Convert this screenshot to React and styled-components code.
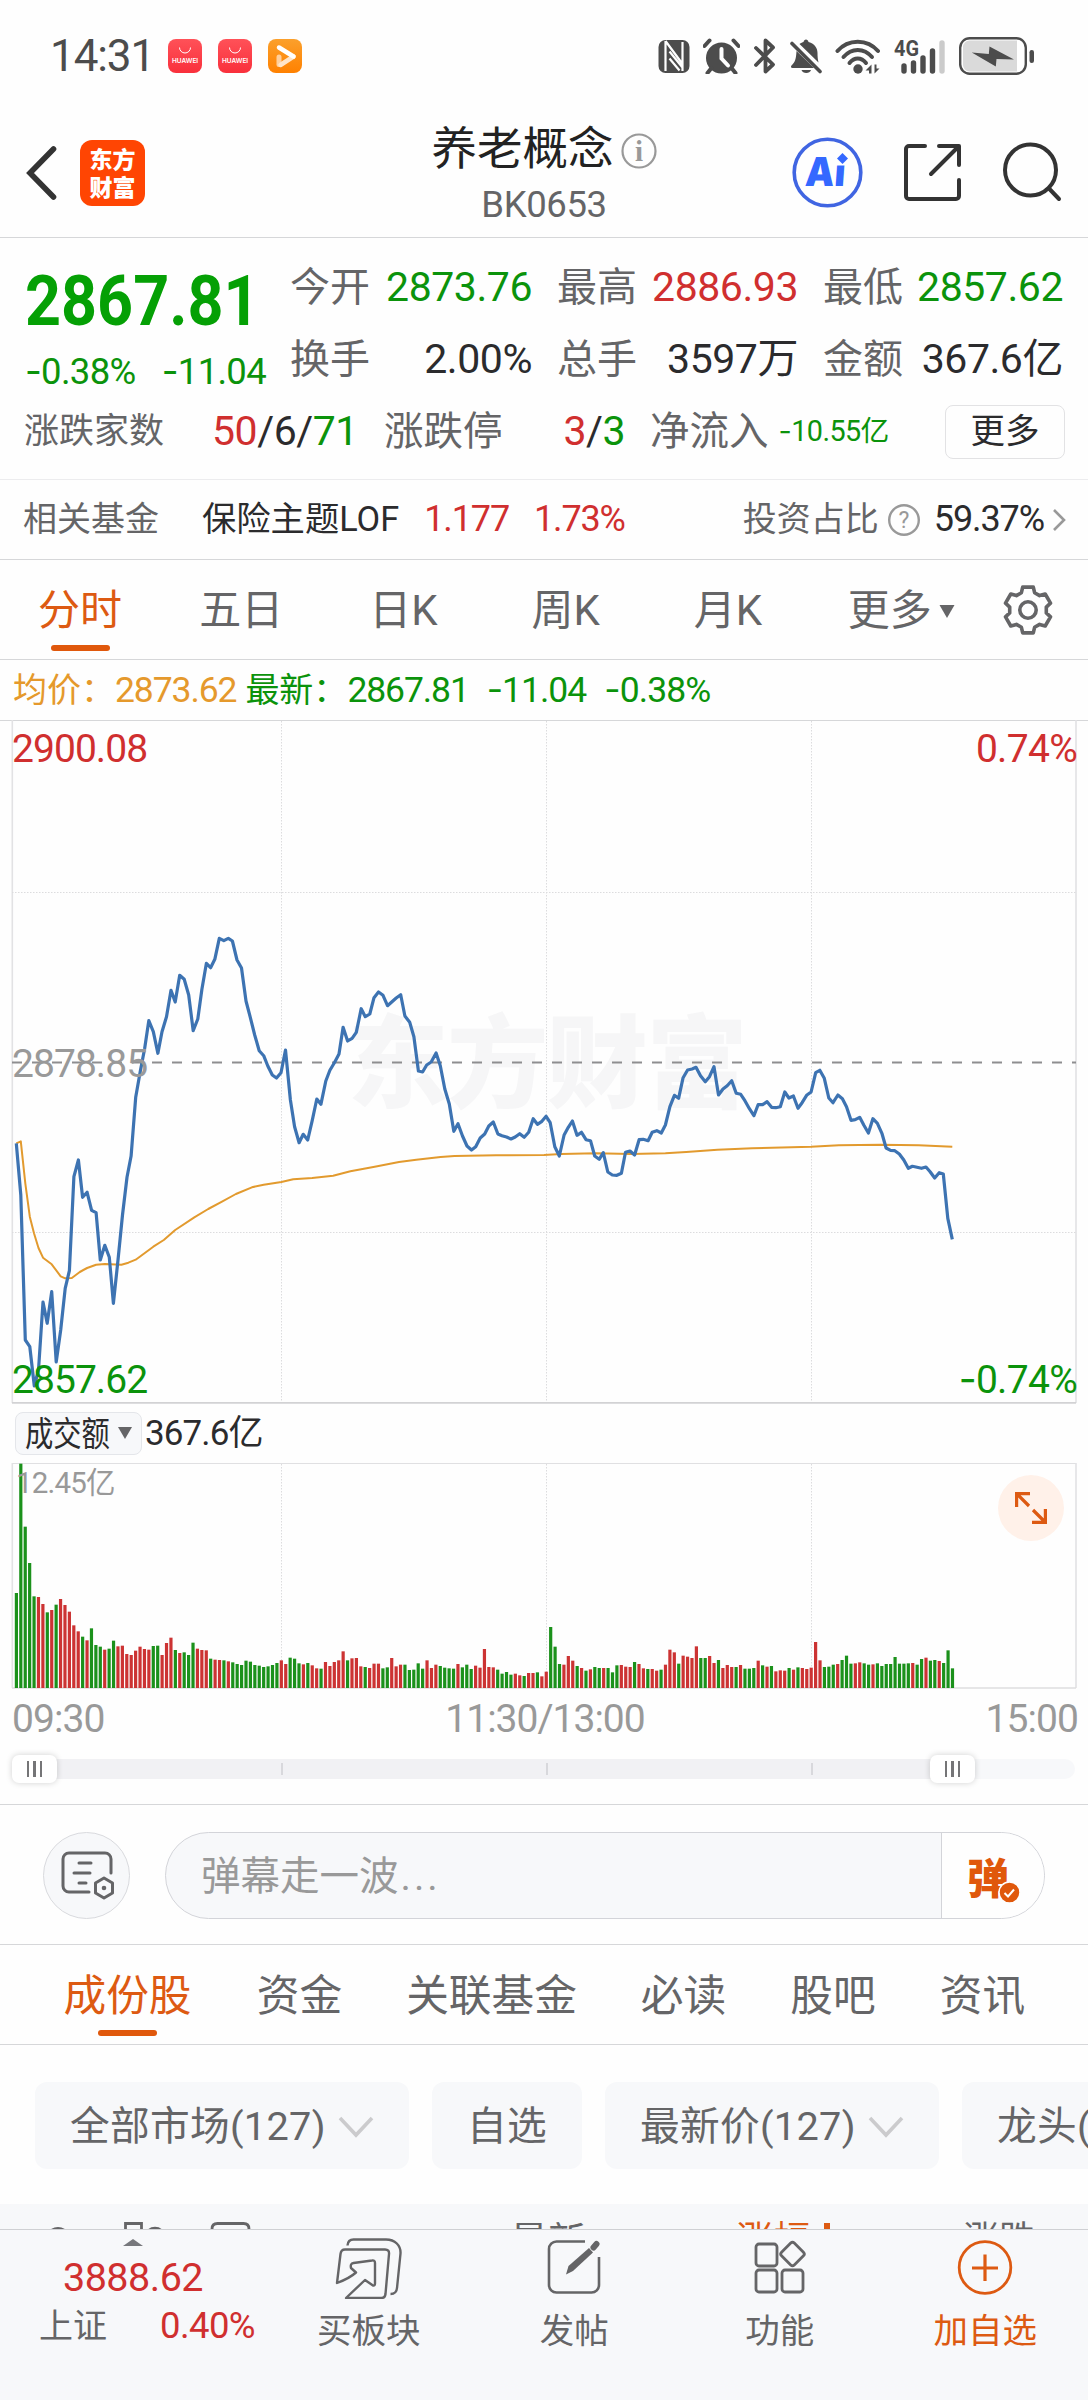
import React from "react";
import styled, { createGlobalStyle } from "styled-components";

const GREEN = "#0b930b";
const RED = "#d02f2f";
const ORANGE = "#dd5a12";
const INK = "#2b2b2d";
const GREY = "#656567";
const MUTED = "#999999";
const LINE = "#d6d7d9";
const PANEL = "#f7f8fa";

const Global = createGlobalStyle`
  * { box-sizing: border-box; }
  body { margin: 0; background: #fefefe; font-family: Roboto, "Noto Sans CJK SC", sans-serif; }
  svg { display: block; flex: none; }
`;

const Screen = styled.div`
  width: 1088px;
  height: 2400px;
  overflow: hidden;
  display: flex;
  flex-direction: column;
  background: #fefefe;
  color: ${INK};
  white-space: nowrap;
`;

const Text = styled.span`
  flex: none;
  font-size: ${(p) => p.$s || 40}px;
  line-height: 1.2;
  font-weight: ${(p) => p.$w || 400};
  color: ${(p) => p.$c || INK};
  letter-spacing: ${(p) => p.$ls || 0}px;
  margin-left: ${(p) => p.$ml || 0}px;
`;

const Dash = styled.span`
  font-family: Inter, sans-serif;
`;

/* Numbers get a wider sign than Roboto's own hyphen. */
function Num({ children, ...rest }) {
  const s = String(children);
  return (
    <Text {...rest}>
      {s[0] === "-" ? <Dash>-</Dash> : null}
      {s[0] === "-" ? s.slice(1) : s}
    </Text>
  );
}

/* ---------- status bar ---------- */
const StatusBar = styled.div`
  height: 112px;
  flex: none;
  display: flex;
  align-items: center;
  padding: 0 53px 0 50px;
`;
const AppBadges = styled.div`
  display: flex;
  gap: 16px;
  margin-left: 14px;
`;
const Badge = styled.div`
  width: 34px;
  height: 34px;
  border-radius: 8px;
  background: ${(p) => p.$bg};
  display: flex;
  flex-direction: column;
  align-items: center;
  justify-content: center;
`;
const BadgeWord = styled.span`
  font: 600 6.500px/8px Inter, sans-serif;
  color: #fff;
  margin-top: 3px;
`;
const StatusIcons = styled.div`
  display: flex;
  align-items: center;
  margin-left: auto;
`;
const Slot = styled.div`
  width: ${(p) => p.$w}px;
  margin-left: ${(p) => p.$ml || 0}px;
  flex: none;
`;

function StoreBadge() {
  return (
    <Badge $bg="linear-gradient(#ff5158, #f9303c)">
      <svg width="14" height="7" viewBox="0 0 14 7">
        <path d="M1.500 0.500a5.500 5.500 0 0 0 11 0" fill="none" stroke="#fff" strokeWidth="1" />
      </svg>
      <BadgeWord>HUAWEI</BadgeWord>
    </Badge>
  );
}

function Status() {
  const c = "#4c4c4c";
  return (
    <StatusBar>
      <Text $s={44} $c={c} $ls={-1.1}>14:31</Text>
      <AppBadges>
        <StoreBadge />
        <StoreBadge />
        <Badge $bg="linear-gradient(#fba02c, #ff8100)">
          <svg width="34" height="34" viewBox="0 0 34 34" fill="none" strokeLinecap="round" strokeLinejoin="round">
            <path d="M11 18v7.500" stroke="#ffcf9c" strokeWidth="5" />
            <path d="M12.500 26l13-8.500" stroke="#ffe4c8" strokeWidth="4.500" />
            <path d="M11 8.500l14.500 9" stroke="#fff" strokeWidth="4.500" />
          </svg>
        </Badge>
      </AppBadges>
      <StatusIcons>
        <Slot $w={32}>
          <svg width="32" height="36" viewBox="0 0 32 36">
            <rect x="0.500" y="2" width="31" height="33" rx="7" fill={c} />
            <path d="M7.500 3v30M24.500 4v29M7.500 3l17 23M11.500 13.500l13 16M11.500 20.500l10 12" fill="none" stroke="#fefefe" strokeWidth="2.200" />
          </svg>
        </Slot>
        <Slot $w={37} $ml={13}>
          <svg width="37" height="36" viewBox="0 0 37 36">
            <circle cx="18.500" cy="20" r="15.500" fill={c} />
            <path d="M1.500 8l5-5.500M35.500 8l-5-5.500M8.500 30l-4 5M28.500 30l4 5" stroke={c} strokeWidth="4" strokeLinecap="round" />
            <path d="M18.500 11v9.500l6.500 7" fill="none" stroke="#fefefe" strokeWidth="4" strokeLinecap="round" />
          </svg>
        </Slot>
        <Slot $w={22} $ml={14}>
          <svg width="22" height="36" viewBox="0 0 22 36">
            <path d="M2 10l17 16.500-7.500 7V2.500l7.500 7L2 27" fill="none" stroke={c} strokeWidth="3.800" strokeLinejoin="round" strokeLinecap="round" />
          </svg>
        </Slot>
        <Slot $w={32} $ml={14}>
          <svg width="32" height="36" viewBox="0 0 32 36">
            <path d="M6.500 13L24 30H2.500c-1.500 0-2-1.500-1-2.500C5 24 6 22 6.500 13z" fill={c} />
            <path d="M9.500 6C11 4.800 12.500 4.300 13.500 4c.5-3.500 4.500-3.500 5 0 6.500 1.500 9 6.500 9 11 0 3.500.3 6.500 1 9.500z" fill={c} />
            <path d="M2 5.500l28 28" stroke={c} strokeWidth="3.600" strokeLinecap="round" />
            <path d="M11.500 32h9.500c-1 4-8.500 4-9.500 0z" fill={c} />
          </svg>
        </Slot>
        <Slot $w={46} $ml={13}>
          <svg width="46" height="36" viewBox="0 0 46 36">
            <g fill="none" stroke={c} strokeWidth="4" strokeLinecap="round">
              <path d="M2.500 13C13 0.500 32.500 0.500 43 13" />
              <path d="M8.500 19C16.500 9.500 29 9.500 37 19" />
              <path d="M14.500 25c4.800-6 11.700-6 16.500 0" />
            </g>
            <circle cx="23" cy="31" r="4.700" fill={c} />
            <path d="M36.500 26.500v9h-2.500v-3h-3.500zM39.500 26.500v9l5-5h-3v-4z" fill={c} />
          </svg>
        </Slot>
        <Slot $w={52} $ml={13}>
          <svg width="52" height="36" viewBox="0 0 52 36">
            <text x="0" y="18" fontFamily="Roboto" fontWeight="700" fontSize="22" textLength="25" lengthAdjust="spacingAndGlyphs" fill={c}>4G</text>
            <g stroke={c} strokeWidth="5.400" strokeLinecap="round">
              <path d="M10 28v5M19.500 25v8M29 20v13M38.500 13v20" />
              <path d="M48 5v28" stroke="#cbcbcb" />
            </g>
          </svg>
        </Slot>
        <Slot $w={76} $ml={13}>
          <svg width="76" height="40" viewBox="0 0 76 40">
            <rect x="1.200" y="2.200" width="65.600" height="35.600" rx="9.500" fill="#fff" stroke={c} strokeWidth="2.400" />
            <path d="M10.500 4.500H58v31H10.500a6.500 6.500 0 0 1-6.500-6.500V11a6.500 6.500 0 0 1 6.500-6.500z" fill="#dadada" />
            <path d="M12.800 16.500L29.800 18l.7-7.500L55 23.500 37.500 23l-.7 7.500z" fill={c} />
            <rect x="70.500" y="14" width="4.500" height="13" rx="2.200" fill={c} />
          </svg>
        </Slot>
      </StatusIcons>
    </StatusBar>
  );
}

/* ---------- header ---------- */
const HeaderBar = styled.div`
  height: 126px;
  flex: none;
  display: grid;
  grid-template-columns: 400px 288px 400px;
  border-bottom: 1px solid ${LINE};
`;
const HeaderSide = styled.div`
  display: flex;
  align-items: center;
  justify-content: ${(p) => (p.$end ? "flex-end" : "flex-start")};
  padding: ${(p) => (p.$end ? "0 26px 5px 0" : "0 0 4px 26px")};
`;
const Logo = styled.div`
  width: 65px;
  height: 66px;
  margin-left: 23px;
  border-radius: 12px;
  background: #ff4503;
  color: #fff;
  font: 900 23px/28px "Noto Sans CJK SC", sans-serif;
  text-align: center;
  padding-top: 4px;
`;
const HeaderTitle = styled.div`
  display: flex;
  flex-direction: column;
  align-items: center;
  padding-top: 11px;
`;
const TitleLine = styled.div`
  display: flex;
  align-items: center;
  height: 60px;
  gap: 7px;
  padding-bottom: 5px;
`;

function Header() {
  return (
    <HeaderBar>
      <HeaderSide>
        <svg width="31" height="56" viewBox="0 0 31 56">
          <path d="M27.500 4L4 28l23.500 24" fill="none" stroke="#333" strokeWidth="5.600" strokeLinecap="round" />
        </svg>
        <Logo>东方<br />财富</Logo>
      </HeaderSide>
      <HeaderTitle>
        <TitleLine>
          <Text $s={45.500} $c="#222">养老概念</Text>
          <svg width="36" height="36" viewBox="0 0 36 36">
            <circle cx="18" cy="18" r="16.500" fill="none" stroke={MUTED} strokeWidth="2.200" />
            <text x="18" y="28" textAnchor="middle" fontFamily="Liberation Serif" fontWeight="700" fontSize="29" fill={MUTED}>i</text>
          </svg>
        </TitleLine>
        <Text $s={36.500} $c={GREY} $ls={-0.4}>BK0653</Text>
      </HeaderTitle>
      <HeaderSide $end>
        <svg width="71" height="71" viewBox="0 0 71 71">
          <circle cx="35.500" cy="35.500" r="33.300" fill="none" stroke="#4065e2" strokeWidth="3.600" />
          <g transform="skewX(-4)">
            <text x="16" y="49" fontFamily="Inter" fontWeight="900" fontSize="40" textLength="40" lengthAdjust="spacingAndGlyphs" fill="#3468ff">Ai</text>
          </g>
          <rect x="41" y="14" width="17" height="14.500" fill="#fefefe" />
          <path d="M50.500 16l5.500 5.500-5.500 5.500-5.500-5.500z" fill="#3468ff" />
        </svg>
        <Slot $w={60} $ml={40}>
          <svg width="60" height="60" viewBox="0 0 60 60" fill="none" stroke="#333" strokeWidth="4" strokeLinecap="round" strokeLinejoin="round">
            <path d="M22 4H6a3 3 0 0 0-3 3v47a3 3 0 0 0 3 3h47a3 3 0 0 0 3-3V38" />
            <path d="M36 4h20v19M28 32L55 5" />
          </svg>
        </Slot>
        <Slot $w={59} $ml={40}>
          <svg width="59" height="60" viewBox="0 0 59 60" fill="none" stroke="#333" strokeWidth="4" strokeLinecap="round">
            <circle cx="27.500" cy="28" r="25.500" />
            <path d="M46 46.500L56 57" />
          </svg>
        </Slot>
      </HeaderSide>
    </HeaderBar>
  );
}

/* ---------- quote ---------- */
const QuotePanel = styled.div`
  height: 242px;
  flex: none;
  padding: 14px 0 0;
  border-bottom: 1px solid #ececee;
`;
const QuoteTop = styled.div`
  display: grid;
  grid-template-columns: 265px 1fr;
  padding: 0 25px;
`;
const PriceBlock = styled.div`
  padding-top: 7px;
`;
const Price = styled.div`
  height: 80px;
  font-size: 71px;
  line-height: 84px;
  font-weight: 700;
  color: #05a005;
  transform: scaleX(0.885);
  transform-origin: 0 50%;
`;
const Changes = styled.div`
  display: flex;
  justify-content: space-between;
  align-items: center;
  height: 56px;
  padding: 9px 24px 0 0;
`;
const StatGrid = styled.div`
  display: grid;
  grid-template-columns: 242px 241px 240px;
  column-gap: 25px;
  grid-auto-rows: 72px;
`;
const Stat = styled.div`
  display: flex;
  align-items: center;
  justify-content: space-between;
`;
const StatRow = styled.div`
  display: flex;
  align-items: center;
  height: 72px;
  padding: 0 23px 1px 24px;
`;
const MoreButton = styled.button`
  width: 120px;
  height: 54px;
  margin-left: auto;
  display: flex;
  align-items: center;
  justify-content: center;
  padding: 0;
  border: 1.500px solid #e2e2e4;
  border-radius: 8px;
  background: #fefefe;
  font-family: inherit;
`;

const STATS = [
  ["今开", "2873.76", GREEN],
  ["最高", "2886.93", RED],
  ["最低", "2857.62", GREEN],
  ["换手", "2.00%", INK],
  ["总手", "3597万", INK],
  ["金额", "367.6亿", INK],
];

function Quote() {
  return (
    <QuotePanel>
      <QuoteTop>
        <PriceBlock>
          <Price>2867.81</Price>
          <Changes>
            <Num $s={36.500} $c={GREEN} $ls={-0.7}>-0.38%</Num>
            <Num $s={36.500} $c={GREEN} $ls={-0.7}>-11.04</Num>
          </Changes>
        </PriceBlock>
        <StatGrid>
          {STATS.map(([label, value, color]) => (
            <Stat key={label}>
              <Text $s={40} $c={GREY}>{label}</Text>
              <Text $s={41} $c={color} $ls={-0.45}>{value}</Text>
            </Stat>
          ))}
        </StatGrid>
      </QuoteTop>
      <StatRow>
        <Text $s={35} $c={GREY}>涨跌家数</Text>
        <Text $s={41} $ml={48} $ls={-0.45}>
          <Text $s={41} $c={RED} $ls={-0.45}>50</Text>/6/<Text $s={41} $c={GREEN} $ls={-0.45}>71</Text>
        </Text>
        <Text $s={39.500} $c={GREY} $ml={26}>涨跌停</Text>
        <Text $s={41} $ml={61} $ls={-0.45}>
          <Text $s={41} $c={RED} $ls={-0.45}>3</Text>/<Text $s={41} $c={GREEN} $ls={-0.45}>3</Text>
        </Text>
        <Text $s={39.500} $c={GREY} $ml={25}>净流入</Text>
        <Num $s={28.800} $c={GREEN} $ml={10} $ls={-0.6}>-10.55亿</Num>
        <MoreButton><Text $s={34.500}>更多</Text></MoreButton>
      </StatRow>
    </QuotePanel>
  );
}

/* ---------- fund row ---------- */
const FundRow = styled.div`
  height: 80px;
  flex: none;
  display: flex;
  align-items: center;
  padding: 0 22px 0 23px;
  border-bottom: 1px solid ${LINE};
`;
const RightGroup = styled.div`
  margin-left: auto;
  display: flex;
  align-items: center;
`;

function Fund() {
  return (
    <FundRow>
      <Text $s={34} $c={GREY}>相关基金</Text>
      <Text $s={34.300} $ml={43}>保险主题LOF</Text>
      <Text $s={36} $c={RED} $ml={25} $ls={-1.1}>1.177</Text>
      <Text $s={36} $c={RED} $ml={25} $ls={-1.2}>1.73%</Text>
      <RightGroup>
        <Text $s={34} $c={GREY}>投资占比</Text>
        <Slot $w={34} $ml={8}>
          <svg width="34" height="34" viewBox="0 0 34 34">
            <circle cx="17" cy="17" r="14.800" fill="none" stroke={MUTED} strokeWidth="2.400" />
            <text x="17" y="25" textAnchor="middle" fontFamily="Roboto" fontSize="23" fill={MUTED}>?</text>
          </svg>
        </Slot>
        <Text $s={36} $ml={13} $ls={-1.1}>59.37%</Text>
        <Slot $w={14} $ml={8}>
          <svg width="14" height="26" viewBox="0 0 14 26">
            <path d="M2 3l10 10L2 23" fill="none" stroke={MUTED} strokeWidth="2.600" />
          </svg>
        </Slot>
      </RightGroup>
    </FundRow>
  );
}

/* ---------- period tabs ---------- */
const PeriodTabs = styled.div`
  height: 100px;
  flex: none;
  display: flex;
  border-bottom: 1px solid ${LINE};
`;
const Tab = styled.div`
  position: relative;
  display: flex;
  align-items: center;
  justify-content: center;
  width: ${(p) => p.$w}px;
  padding-top: 4px;
  &::after {
    content: "";
    display: ${(p) => (p.$on ? "block" : "none")};
    position: absolute;
    left: 50%;
    bottom: 8px;
    width: 59px;
    height: 6px;
    margin-left: -29.500px;
    border-radius: 3px;
    background: #e0580c;
  }
`;
const GearTab = styled.div`
  display: flex;
  align-items: center;
  margin-left: 9px;
`;
const PERIODS = ["分时", "五日", "日K", "周K", "月K"];

const GEAR_PATH = (() => {
  const pts = [];
  for (let i = 0; i < 6; i += 1) {
    const mid = -90 + i * 60;
    [[-21, 18.5], [-13, 23.5], [13, 23.5], [21, 18.5]].forEach(([d, r]) => {
      const a = ((mid + d) * Math.PI) / 180;
      pts.push(`${(26 + r * Math.cos(a)).toFixed(1)} ${(26 + r * Math.sin(a)).toFixed(1)}`);
    });
  }
  return `M${pts.join("L")}Z`;
})();

function Periods() {
  return (
    <PeriodTabs>
      {PERIODS.map((t, i) => (
        <Tab key={t} $w={i === 0 ? 160 : 162.3} $on={i === 0}>
          <Text $s={42} $c={i === 0 ? ORANGE : GREY}>{t}</Text>
        </Tab>
      ))}
      <Tab $w={184}>
        <Text $s={42} $c={GREY}>更多</Text>
        <Slot $w={16} $ml={7}>
          <svg width="16" height="13" viewBox="0 0 16 13"><path d="M0.500 0h15L8 13z" fill={GREY} /></svg>
        </Slot>
      </Tab>
      <GearTab>
        <svg width="52" height="52" viewBox="0 0 52 52" fill="none" stroke={GREY} strokeWidth="3.600" strokeLinejoin="round">
          <path d={GEAR_PATH} />
          <circle cx="26" cy="26" r="8.200" />
        </svg>
      </GearTab>
    </PeriodTabs>
  );
}

const Legend = styled.div`
  height: 60px;
  flex: none;
  display: flex;
  align-items: center;
  padding-left: 13px;
`;

/* ---------- price chart ---------- */
const W = 1568;
const right = (list) => list.map(([x, y]) => [x + W, y]);
const PRICE = [
  [47,730],[60,885],[73,1320],[86,1340],[99,1458],[111,1410],[124,1206],[136,1270],[149,1175],[162,1386],[175,1290],[188,1165],[200,1112],[213,830],[226,780],[238,892],[251,877],[264,931],[277,938],[289,1080],[302,1036],[315,1072],[327,1210],[340,1080],[353,945],[366,832],[378,768],[391,592],[404,515],[417,445],[429,362],[442,395],[455,460],[467,395],[480,350],[493,271],[505,306],[518,226],[531,238],[544,285],[557,392],[570,357],[582,268],[595,190],[607,203],[619,178],[632,115],[645,122],[658,115],[670,123],[683,180],[696,204],[709,303],[721,350],[734,405],[747,452],[760,467],[772,498],[785,525],[797,534],[810,518],[823,450],[837,600],[849,680],[862,728],[874,703],[887,720],[900,662],[913,597],[925,613],[939,543],[951,511],[964,488],[977,462],[989,382],[1002,423],[1015,415],[1027,397],[1041,326],[1053,350],[1066,342],[1078,293],[1091,276],[1104,286],[1117,317],[1130,305],[1142,294],[1155,284],[1167,348],[1181,367],[1193,410],[1206,513],[1218,516],[1230,495],[1243,486],[1257,459],[1269,497],[1282,567],[1295,612],[1308,694],[1320,671],[1333,708],[1346,738],[1359,750],[1371,740],[1384,714],[1397,702],[1409,678],[1422,666],[1435,702],[1447,707],[1460,711],[1473,717],[1485,711],[1498,701],[1511,712],[1524,697],[1537,656],[1549,673],[1562,664],
  ...right([[6,649],[18,668],[31,740],[44,768],[58,705],[70,682],[82,663],[95,706],[108,697],[121,719],[134,722],[146,768],[159,778],[171,758],[184,816],[197,825],[210,826],[223,820],[235,757],[248,753],[261,765],[274,719],[286,718],[300,722],[312,697],[325,692],[338,699],[350,675],[363,620],[376,586],[388,595],[401,533],[414,510],[427,507],[438,502],[451,527],[465,545],[477,530],[490,500],[503,585],[516,567],[528,557],[541,542],[554,580],[567,583],[579,602],[592,626],[605,647],[617,614],[630,614],[643,605],[656,622],[668,623],[681,620],[694,576],[706,594],[719,588],[732,625],[744,608],[757,586],[770,576],[783,518],[795,511],[808,535],[821,594],[833,608],[847,585],[860,596],[872,620],[885,661],[897,659],[910,652],[922,676],[935,699],[948,656],[961,670],[974,700],[986,744],[999,751],[1011,752],[1024,762],[1037,780],[1050,805],[1062,799],[1075,802],[1088,805],[1101,801],[1113,815],[1126,834],[1139,818],[1151,822],[1164,955],[1177,1018]]),
];
const AVERAGE = [
  [47,730],[60,724],[73,850],[86,950],[98,1000],[111,1044],[124,1073],[149,1093],[175,1129],[188,1135],[207,1134],[230,1116],[251,1104],[277,1094],[302,1092],[350,1094],[370,1088],[391,1079],[442,1040],[472,1020],[505,990],[560,952],[600,927],[640,905],[680,882],[726,862],[760,854],[811,846],[845,838],[900,834],[960,827],[1010,814],[1080,800],[1150,786],[1200,779],[1270,771],[1310,768],[1430,766],[1568,765],
  ...right([[50,762],[150,760],[250,762],[350,760],[410,756],[500,749],[600,745],[770,740],[850,736],[970,734],[1080,736],[1177,740]]),
];
const KX = 1088 / (2 * W);
const toPoints = (list) =>
  list.map(([x, y]) => `${(x * KX).toFixed(1)},${(180 + y / 3).toFixed(1)}`).join(" ");

const PriceChart = styled.div`
  position: relative;
  height: 684px;
  flex: none;
`;
const Mark = styled.div`
  position: absolute;
  top: ${(p) => p.$y - 24}px;
  left: ${(p) => (p.$right ? "auto" : "12px")};
  right: ${(p) => (p.$right ? "11px" : "auto")};
  height: 48px;
  display: flex;
  align-items: center;
`;

function Chart() {
  return (
    <PriceChart>
      <svg width="1088" height="684" viewBox="0 0 1088 684" fill="none">
        <path d="M0 0.500H1088" stroke={LINE} />
        <path d="M12.300 0V683M1076 0V683" stroke="#e2e2e4" strokeWidth="1.600" />
        <path d="M12 682.800H1076" stroke="#d2d2d4" strokeWidth="1.800" />
        <path d="M281.500 1V682M546.500 1V682M811.500 1V682M12 172.500H1076M12 512.500H1076" stroke="#dcdcde" strokeDasharray="1.500 1.500" />
        <text x="547.500" y="380" textAnchor="middle" fontFamily="Noto Sans CJK SC" fontWeight="900" fontSize="101" textLength="400" fill="#f6f6f7">东方财富</text>
        <path d="M12 342.500H1076" stroke="#8e8e90" strokeWidth="1.800" strokeDasharray="10 10" />
        <polyline points={toPoints(AVERAGE)} stroke="#e29a2e" strokeWidth="2" strokeLinejoin="round" />
        <polyline points={toPoints(PRICE)} stroke="#3d73b2" strokeWidth="3.200" strokeLinejoin="round" />
      </svg>
      <Mark $y={29}><Text $s={39} $c={RED} $ls={-0.95}>2900.08</Text></Mark>
      <Mark $y={29} $right><Text $s={39} $c={RED} $ls={-0.7}>0.74%</Text></Mark>
      <Mark $y={344}><Text $s={39} $c={MUTED} $ls={-0.95}>2878.85</Text></Mark>
      <Mark $y={660}><Text $s={39} $c={GREEN} $ls={-0.95}>2857.62</Text></Mark>
      <Mark $y={660} $right><Num $s={39} $c={GREEN} $ls={-0.7}>-0.74%</Num></Mark>
    </PriceChart>
  );
}

/* ---------- volume ---------- */
const VolumeBar = styled.div`
  height: 59px;
  flex: none;
  display: flex;
  align-items: center;
  padding-left: 15px;
`;
const Selector = styled.div`
  width: 127px;
  height: 43px;
  display: flex;
  align-items: center;
  padding-left: 9px;
  border: 1.500px solid #e4e6ea;
  border-radius: 8px;
  background: ${PANEL};
`;
const Narrow = styled.span`
  width: 92px;
  font-size: 34.500px;
  line-height: 40px;
  color: ${INK};
  transform: scaleX(0.82);
  transform-origin: 0 50%;
`;
const VolumeChart = styled.div`
  position: relative;
  height: 226px;
  flex: none;
`;
const FullButton = styled.div`
  position: absolute;
  right: 24px;
  top: 12px;
  width: 66px;
  height: 66px;
  border-radius: 50%;
  background: #fff1e9;
  display: flex;
  align-items: center;
  justify-content: center;
`;

const VOLUME = (
  "610g 222g 411g 520g 620g 622r 643r 668g 661r 645g 628r 646r 666r 707r 725r 741g 752r 716g 766g 771g " +
  "780r 777g 753g 770r 768r 793r 796r 783r 771r 778r 780r 769g 768g 796r 760r 744r 781g 790r 788g 796g " +
  "759g 777r 781r 782r 807g 810r 811r 812g 815r 818g 823g 826g 813g 816g 826g 828g 832g 830g 826g 820g " +
  "812r 823r 804g 807g 821g 824r 820g 827r 836r 837g 817r 829r 817r 812r 785r 812g 806r 805r 830r 832g " +
  "835r 822r 822r 836g 833g 805r 830r 825r 825g 841g 840g 821g 837g 812r 835r 825r 829g 834g 836g 837g " +
  "823r 833g 825g 838g 828r 834r 778r 832r 833r 840g 852g 847g 855g 852r 857r 859g 850r 850r 848g 860r " +
  "846r 712g 771g 823g 825r 799r 813r 829g 835r 843g 839r 832g 835g 835r 835g 848g 827g 826r 831r 832r " +
  "817g 823r 836r 838g 838r 843r 840g 825r 780r 788r 822g 798r 801r 805r 770r 805g 805g 799r 820r 811g " +
  "835r 826r 832r 832g 826r 837g 837g 835g 813r 827g 831r 829g 845r 842r 843r 835g 840r 833g 835r 838r " +
  "834r 757r 812r 832g 831g 825g 823r 811g 798g 822g 821r 818r 821g 825g 824r 821g 829g 823g 823g 802g " +
  "822g 822g 821g 820r 825g 808g 804r 813g 811g 814r 820g 782g 836g"
).split(" ");

function Volume() {
  return (
    <VolumeChart>
      <svg width="1088" height="226" viewBox="0 0 1088 226" fill="none">
        <path d="M12 0.500H1076" stroke="#e0e0e2" />
        <path d="M12.300 0V225M1076 0V225" stroke="#e2e2e4" strokeWidth="1.600" />
        <path d="M12 225H1076" stroke="#dededf" strokeWidth="1.600" />
        <path d="M281.500 1V225M546.500 1V225M811.500 1V225" stroke="#dcdcde" strokeDasharray="1.500 1.500" />
        {VOLUME.map((v, i) => {
          const top = (parseInt(v, 10) - 220) / 3;
          return (
            <rect
              key={i}
              x={14.8 + i * 4.4155}
              y={top}
              width="3.200"
              height={225 - top}
              fill={v.endsWith("g") ? "#1b911b" : "#cc3333"}
            />
          );
        })}
      </svg>
      <Mark $y={21}><Text $s={29.500} $c={MUTED} $ml={4} $ls={-0.8}>12.45亿</Text></Mark>
      <FullButton>
        <svg width="34" height="34" viewBox="0 0 34 34" fill="none" stroke={ORANGE} strokeWidth="3.200">
          <path d="M16 2.600H2.600V16M3 3l12 12M31.400 18v13.400H18M31 31L19 19" />
        </svg>
      </FullButton>
    </VolumeChart>
  );
}

const TimeAxis = styled.div`
  height: 60px;
  flex: none;
  display: grid;
  grid-template-columns: 1fr auto 1fr;
  align-items: center;
  padding: 0 10px 0 12px;
  & > :last-child { text-align: right; }
`;
const SliderRow = styled.div`
  height: 56px;
  flex: none;
  padding: 10px 13px 0 12px;
  border-bottom: 1px solid ${LINE};
`;
const Track = styled.div`
  position: relative;
  height: 20px;
  border-radius: 10px;
  background: linear-gradient(90deg, #f1f1f4 940px, #f7f8fa 940px);
`;
const Handle = styled.div`
  position: absolute;
  top: -4px;
  left: ${(p) => p.$x}px;
  width: 45px;
  height: 28px;
  border-radius: 7px;
  background: #fff;
  box-shadow: 0 0 6px rgba(0, 0, 0, 0.18);
  display: flex;
  align-items: center;
  justify-content: center;
  gap: 4px;
`;
const Grip = styled.i`
  width: 2.500px;
  height: 16px;
  background: #757577;
`;
const Tick = styled.i`
  position: absolute;
  top: 4px;
  left: ${(p) => p.$x}px;
  width: 1.500px;
  height: 12px;
  background: #d8d8dc;
`;

function Slider() {
  return (
    <SliderRow>
      <Track>
        <Tick $x={269} />
        <Tick $x={534} />
        <Tick $x={799} />
        {[0, 918].map((x) => (
          <Handle key={x} $x={x}><Grip /><Grip /><Grip /></Handle>
        ))}
      </Track>
    </SliderRow>
  );
}

/* ---------- comment bar ---------- */
const CommentBar = styled.div`
  height: 140px;
  flex: none;
  display: flex;
  align-items: center;
  padding: 2px 43px 0 43px;
  border-bottom: 1px solid ${LINE};
`;
const RoundButton = styled.div`
  width: 87px;
  height: 87px;
  border-radius: 50%;
  border: 1.500px solid #d9dade;
  background: ${PANEL};
  display: flex;
  align-items: center;
  justify-content: center;
`;
const InputPill = styled.div`
  width: 880px;
  height: 87px;
  margin-left: 35px;
  display: flex;
  overflow: hidden;
  border: 1.500px solid #d3d4d9;
  border-radius: 44px;
  background: ${PANEL};
`;
const InputField = styled.div`
  flex: 1;
  display: flex;
  align-items: center;
  padding: 2px 0 0 35px;
`;
const SendCell = styled.div`
  width: 103px;
  border-left: 1px solid #d3d4d9;
  background: #fefefe;
  display: flex;
  align-items: center;
  padding-left: 25px;
`;
const DanmuMark = styled.div`
  position: relative;
  font: 900 42px/50px "Noto Sans CJK SC", sans-serif;
  color: #e0580c;
  svg { position: absolute; right: -12px; bottom: -3px; }
`;

function Comment() {
  return (
    <CommentBar>
      <RoundButton>
        <svg width="56" height="52" viewBox="0 0 56 52" fill="none" stroke={GREY} strokeWidth="3" strokeLinecap="round">
          <path d="M30 42H10a6 6 0 0 1-6-6V9a6 6 0 0 1 6-6h36a6 6 0 0 1 6 6v14" />
          <path d="M20 13h12M15 23h16M20 33h7" />
          <path d="M45 28l8.500 5v10L45 48l-8.500-5V33z" strokeLinejoin="round" />
          <circle cx="45" cy="38" r="2.300" fill={GREY} stroke="none" />
        </svg>
      </RoundButton>
      <InputPill>
        <InputField>
          <Text $s={39.500} $c={MUTED}>弹幕走一波<Text $s={39.500} $c={MUTED} $ls={3} $ml={2}>...</Text></Text>
        </InputField>
        <SendCell>
          <DanmuMark>
            弹
            <svg width="23" height="23" viewBox="0 0 23 23">
              <circle cx="11.500" cy="11.500" r="10.500" fill="#e0580c" stroke="#fefefe" strokeWidth="1.500" />
              <path d="M6.500 12l3.500 3.500 6-7" fill="none" stroke="#fff" strokeWidth="2" />
            </svg>
          </DanmuMark>
        </SendCell>
      </InputPill>
    </CommentBar>
  );
}

/* ---------- sections ---------- */
const SectionTabs = styled.div`
  height: 100px;
  flex: none;
  display: flex;
  padding-left: 42px;
  border-bottom: 1px solid ${LINE};
`;
const SECTIONS = [["成份股", 171], ["资金", 173], ["关联基金", 211], ["必读", 173], ["股吧", 126], ["资讯", 173]];

const Chips = styled.div`
  height: 159px;
  flex: none;
  display: flex;
  gap: 23px;
  padding: 37px 0 0 35px;
`;
const Chip = styled.div`
  flex: none;
  width: ${(p) => p.$w}px;
  height: 87px;
  border-radius: 12px;
  background: ${PANEL};
  display: flex;
  align-items: center;
  padding: 3px 0 0 35px;
`;
const CHIPS = [["全部市场(127)", 374, true], ["自选", 150, false], ["最新价(127)", 334, true], ["龙头(127)", 300, true]];

function Chevron() {
  return (
    <Slot $w={36} $ml={12}>
      <svg width="36" height="22" viewBox="0 0 36 22">
        <path d="M2 2l16 17L34 2" fill="none" stroke="#cbcbcd" strokeWidth="3.600" />
      </svg>
    </Slot>
  );
}

const TableHead = styled.div`
  height: 25px;
  flex: none;
  overflow: hidden;
  display: flex;
  align-items: flex-start;
  background: ${PANEL};
`;
const HeadCell = styled.div`
  width: ${(p) => p.$w}px;
  padding-top: 15px;
  flex: none;
  display: flex;
`;

function Head() {
  return (
    <TableHead>
      <svg width="510" height="25" viewBox="0 0 510 25" fill="none" stroke={GREY} strokeWidth="2.800">
        <path d="M48 29q10-9 20 0" />
        <path d="M125.500 30V19.500h16V30M147 30a8.500 9 0 0 1 16 0M212 30v-5q0-5.500 5.500-5.500h26q5.500 0 5.500 5.500v5" />
      </svg>
      <HeadCell $w={224}><Text $s={38} $c={GREY}>最新</Text></HeadCell>
      <HeadCell $w={229}>
        <Text $s={37} $c={ORANGE} $ml={2}>涨幅</Text>
        <Slot $w={6} $ml={14}>
          <svg width="6" height="20" viewBox="0 0 6 20"><path d="M0 4h6v16H0z" fill={ORANGE} /></svg>
        </Slot>
      </HeadCell>
      <HeadCell $w={120}><Text $s={36} $c={GREY}>涨跌</Text></HeadCell>
    </TableHead>
  );
}

/* ---------- bottom bar ---------- */
const BottomBar = styled.div`
  height: 171px;
  flex: none;
  display: grid;
  grid-template-columns: 266px repeat(4, 205.500px);
  border-top: 1px solid #cfd0d3;
  background: ${PANEL};
`;
const IndexCell = styled.div`
  display: flex;
  flex-direction: column;
  align-items: center;
  padding-top: 9px;
`;
const IndexValue = styled.div`
  display: flex;
  align-items: center;
  height: 48px;
  margin-top: 8px;
`;
const IndexRow = styled.div`
  display: flex;
  align-items: center;
  justify-content: space-between;
  width: 216px;
  height: 48px;
  margin-left: 28px;
`;
const Action = styled.div`
  display: flex;
  flex-direction: column;
  align-items: center;
  padding-top: 7px;
`;
const IconBox = styled.div`
  height: 74px;
`;

const icons = {
  buy: (
    <svg width="68" height="62" viewBox="0 0 68 62" fill="none" stroke={GREY} strokeWidth="2.400" strokeLinejoin="round">
      <path d="M12.500 8.500q.5-6 6-6H51c9 0 15 6 14.500 14L62 51q-.5 6-6.500 6" />
      <path d="M2 46L5.500 17q.5-4.500 4.500-4.500h40q4.500 0 4 4.500L50.500 57q-.5 4-4 4H11l19-18 8 5.500q2 .5 2-2V26q0-3-3-2.500L18.500 26q-3.500.5-2.500 5l5 4.500C16 40 10 43 2 46z" />
    </svg>
  ),
  post: (
    <svg width="54" height="62" viewBox="0 0 54 62" fill="none" stroke={GREY} strokeWidth="2.600">
      <path d="M38 4.500H9.500A7.500 7.500 0 0 0 2 12v36a7.500 7.500 0 0 0 7.500 7.500h35A7.500 7.500 0 0 0 52 48V20" />
      <path d="M19 37.500l2.500-8.500L42 11l4 4.500L26 34z" fill={GREY} stroke="none" />
      <path d="M46.500 10.500l3-3.500" strokeWidth="6" strokeLinecap="round" />
    </svg>
  ),
  tools: (
    <svg width="52" height="62" viewBox="0 0 52 62" fill="none" stroke={GREY} strokeWidth="2.800">
      <rect x="2" y="7" width="21" height="22" rx="3" />
      <rect x="2" y="33" width="21" height="22" rx="3" />
      <rect x="28" y="33" width="21" height="22" rx="3" />
      <rect x="29.500" y="8" width="18" height="18" rx="2.500" transform="rotate(45 38.500 17)" />
    </svg>
  ),
  add: (
    <svg width="56" height="62" viewBox="0 0 56 62" fill="none" stroke={ORANGE} strokeWidth="2.800">
      <circle cx="28" cy="30.500" r="25.800" />
      <path d="M15 31h26M28 17.500v26.500" strokeWidth="3.200" />
    </svg>
  ),
};
const ACTIONS = [["buy", "买板块"], ["post", "发帖"], ["tools", "功能"], ["add", "加自选"]];

function Bottom() {
  return (
    <BottomBar>
      <IndexCell>
        <svg width="20" height="7" viewBox="0 0 20 7"><path d="M0 7L10 0l10 7z" fill="#77787c" /></svg>
        <IndexValue>
          <Text $s={39.500} $c={RED} $ls={-0.5}>3888.62</Text>
        </IndexValue>
        <IndexRow>
          <Text $s={34} $c={GREY}>上证</Text>
          <Text $s={36.500} $c={RED} $ls={-0.6}>0.40%</Text>
        </IndexRow>
      </IndexCell>
      {ACTIONS.map(([icon, label]) => (
        <Action key={icon}>
          <IconBox>{icons[icon]}</IconBox>
          <Text $s={34.500} $c={icon === "add" ? ORANGE : GREY}>{label}</Text>
        </Action>
      ))}
    </BottomBar>
  );
}

export default function App() {
  return (
    <Screen>
      <Global />
      <Status />
      <Header />
      <Quote />
      <Fund />
      <Periods />
      <Legend>
        <Text $s={34} $c="#e5992c">均价：</Text>
        <Text $s={35.500} $c="#e5992c" $ls={-1.1}>2873.62</Text>
        <Text $s={34} $c={GREEN} $ml={9}>最新：</Text>
        <Text $s={35.500} $c={GREEN} $ls={-1.1}>2867.81</Text>
        <Num $s={35.500} $c={GREEN} $ls={-1} $ml={18}>-11.04</Num>
        <Num $s={35.500} $c={GREEN} $ls={-0.9} $ml={18}>-0.38%</Num>
      </Legend>
      <Chart />
      <VolumeBar>
        <Selector>
          <Narrow>成交额</Narrow>
          <svg width="16" height="13" viewBox="0 0 16 13"><path d="M1 0h14L8 12z" fill={GREY} /></svg>
        </Selector>
        <Text $s={35} $ml={3} $ls={-0.9}>367.6亿</Text>
      </VolumeBar>
      <Volume />
      <TimeAxis>
        <Text $s={39} $c={MUTED} $ls={-0.9}>09:30</Text>
        <Text $s={39} $c={MUTED} $ls={-1}>11:30/13:00</Text>
        <Text $s={39} $c={MUTED} $ls={-0.9}>15:00</Text>
      </TimeAxis>
      <Slider />
      <Comment />
      <SectionTabs>
        {SECTIONS.map(([t, w], i) => (
          <Tab key={t} $w={w} $on={i === 0}>
            <Text $s={42.700} $c={i === 0 ? ORANGE : GREY}>{t}</Text>
          </Tab>
        ))}
      </SectionTabs>
      <Chips>
        {CHIPS.map(([t, w, more]) => (
          <Chip key={t} $w={w}>
            <Text $s={39.700} $c={GREY} $ls={0.3}>{t}</Text>
            {more ? <Chevron /> : null}
          </Chip>
        ))}
      </Chips>
      <Head />
      <Bottom />
    </Screen>
  );
}
